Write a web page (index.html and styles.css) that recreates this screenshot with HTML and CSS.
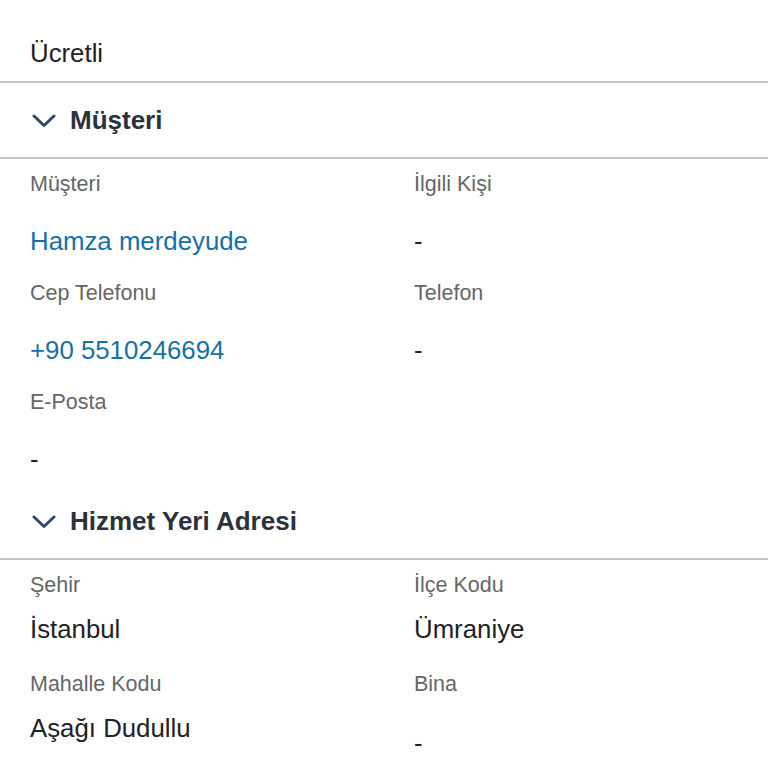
FILE: index.html
```html
<!DOCTYPE html>
<html lang="tr">
<head>
<meta charset="utf-8">
<link rel="stylesheet" href="styles.css">
</head>
<body>
<div class="page">
  <div class="top-field">
    <div class="value">Ücretli</div>
  </div>
  <div class="divider"></div>

  <div class="section-header">
    <svg class="chevron" viewBox="0 0 24 14" width="24" height="14"><path d="M2 2 L12 11.5 L22 2" fill="none" stroke="#2e4a63" stroke-width="3" stroke-linecap="round" stroke-linejoin="round"/></svg>
    <span class="section-title">Müşteri</span>
  </div>
  <div class="divider"></div>

  <div class="grid grid-customer">
    <div class="field">
      <div class="label">Müşteri</div>
      <div class="value link">Hamza merdeyude</div>
    </div>
    <div class="field">
      <div class="label">İlgili Kişi</div>
      <div class="value">-</div>
    </div>
    <div class="field">
      <div class="label">Cep Telefonu</div>
      <div class="value link">+90 5510246694</div>
    </div>
    <div class="field">
      <div class="label">Telefon</div>
      <div class="value">-</div>
    </div>
    <div class="field">
      <div class="label">E-Posta</div>
      <div class="value">-</div>
    </div>
  </div>

  <div class="section-header">
    <svg class="chevron" viewBox="0 0 24 14" width="24" height="14"><path d="M2 2 L12 11.5 L22 2" fill="none" stroke="#2e4a63" stroke-width="3" stroke-linecap="round" stroke-linejoin="round"/></svg>
    <span class="section-title">Hizmet Yeri Adresi</span>
  </div>
  <div class="divider"></div>

  <div class="grid grid-address">
    <div class="field">
      <div class="label">Şehir</div>
      <div class="value">İstanbul</div>
    </div>
    <div class="field">
      <div class="label">İlçe Kodu</div>
      <div class="value">Ümraniye</div>
    </div>
    <div class="field">
      <div class="label">Mahalle Kodu</div>
      <div class="value">Aşağı Dudullu</div>
    </div>
    <div class="field">
      <div class="label">Bina</div>
      <div class="value value-empty">-</div>
    </div>
  </div>
</div>
</body>
</html>
```
FILE: styles.css
```css
html, body {
  margin: 0;
  padding: 0;
  background: #ffffff;
}

body {
  font-family: "Liberation Sans", Arial, sans-serif;
  color: #222222;
  width: 768px;
  height: 768px;
  overflow: hidden;
}

.page {
  display: flex;
  flex-direction: column;
}

.top-field {
  padding: 38px 30px 13px;
}

.divider {
  height: 2px;
  background: #c4c4c4;
}

.section-header {
  display: flex;
  align-items: center;
  gap: 14px;
  height: 74px;
  padding: 0 32px;
  box-sizing: border-box;
}

.chevron {
  display: block;
  margin-top: 1px;
}

.section-title {
  font-size: 26px;
  font-weight: bold;
  color: #2a323c;
  line-height: 30px;
}

.grid {
  display: grid;
  grid-template-columns: 384px 384px;
  padding: 0 0 0 30px;
}

.grid-customer {
  padding-top: 12px;
  padding-bottom: 10px;
}

.grid-customer .field {
  display: flex;
  flex-direction: column;
  gap: 29px;
  padding-bottom: 24px;
}

.grid-customer .field:nth-child(n+5) {
  padding-bottom: 0;
}

.grid-address {
  padding-top: 12px;
}

.grid-address .field {
  display: flex;
  flex-direction: column;
  gap: 16px;
  padding-bottom: 27px;
}

.label {
  font-size: 21.5px;
  line-height: 26px;
  color: #666666;
}

.value {
  font-size: 25.8px;
  line-height: 30px;
  color: #222222;
}

.value.link {
  color: #1670a8;
}

.value-empty {
  padding-top: 15px;
}
```
